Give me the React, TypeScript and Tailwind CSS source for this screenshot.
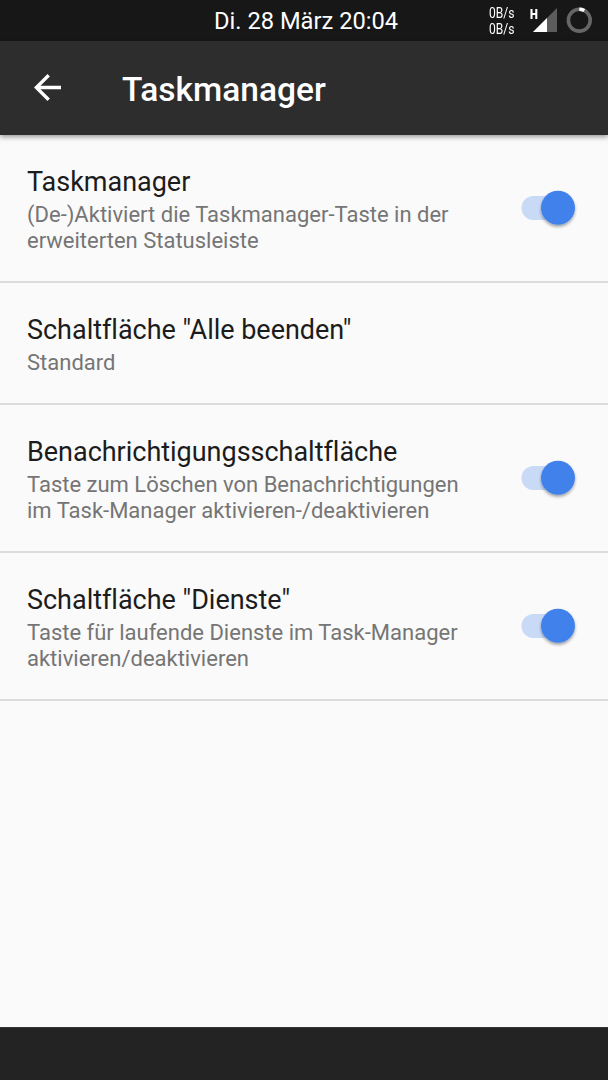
import React from "react";

function Toggle() {
  return (
    <svg className="h-[50px] w-[64px] shrink-0" viewBox="0 0 64 50" aria-hidden="true">
      <defs>
        <filter id="thumb" x="-30%" y="-30%" width="160%" height="170%">
          <feDropShadow dx="0" dy="2" stdDeviation="1.5" floodColor="#000" floodOpacity="0.36" />
        </filter>
      </defs>
      <rect x="5.500" y="13" width="48" height="24" rx="12" fill="#c8daf6" />
      <circle cx="42" cy="24.800" r="17" fill="#4081ec" filter="url(#thumb)" />
    </svg>
  );
}

type RowProps = { title: string; lines: string[]; toggle?: boolean };

function Row({ title, lines, toggle }: RowProps) {
  return (
    <div className={`flex items-center justify-between border-b-2 border-[#dcdcdc] pl-[27px] pr-[28px] ${lines.length > 1 ? "h-[148px]" : "h-[122px]"}`}>
      <div className="whitespace-nowrap pt-[5px]">
        <div className="mb-[4px] text-[27px] leading-[31px] tracking-[-0.02px] text-[#1c1c1c]">{title}</div>
        <div className="text-[22px] leading-[26px] text-[#757575]">
          {lines.map((l) => (
            <div key={l}>{l}</div>
          ))}
        </div>
      </div>
      {toggle && <Toggle />}
    </div>
  );
}

export default function App() {
  return (
    <div className="flex h-[1080px] w-[608px] flex-col overflow-hidden bg-[#fafafa] font-[Roboto,sans-serif]">
      <div className="flex h-[41px] shrink-0 items-center bg-[#171717] pl-[214px] text-white">
        <div className="w-[275px] whitespace-nowrap pt-[2px] text-[23.7px] leading-[41px]">Di. 28 März 20:04</div>
        <div className="w-[40px] origin-left scale-x-[0.86] text-[14px] leading-[16px]">
          <div>0B/s</div>
          <div>0B/s</div>
        </div>
        <svg className="h-[41px] w-[79px]" viewBox="529 0 79 41">
          <path d="M533 32 557 8V32Z" fill="#5c5c5c" />
          <path d="M533 32 547 18V32Z" fill="#fff" />
          <path d="M531.500 9V19M536.300 9V19M531 14H537" stroke="#fff" strokeWidth="2.100" />
          <circle cx="579.3" cy="20.2" r="10.9" fill="none" stroke="#666" strokeWidth="3.6" />
          <path d="M579.300 9.300A10.900 10.900 0 0 1 584.300 10.500" fill="none" stroke="#fff" strokeWidth="3.6" />
        </svg>
      </div>
      <div className="z-10 flex h-[94px] shrink-0 items-center bg-[#2d2d2d] pl-[33px] text-white shadow-[0_2px_5px_rgba(0,0,0,0.4)]">
        <svg className="h-[30px] w-[89px]" viewBox="33 73 89 30">
          <path transform="translate(27.25 67.25) scale(1.6875)" d="M20 11H7.830l5.590-5.590L12 4l-8 8 8 8 1.410-1.410L7.830 13H20z" fill="#fff" />
        </svg>
        <h1 className="pt-[3px] text-[33.5px] font-medium leading-[40px]">Taskmanager</h1>
      </div>
      <main className="flex grow flex-col">
        <Row title="Taskmanager" lines={["(De-)Aktiviert die Taskmanager-Taste in der", "erweiterten Statusleiste"]} toggle />
        <Row title={'Schaltfläche "Alle beenden"'} lines={["Standard"]} />
        <Row title="Benachrichtigungsschaltfläche" lines={["Taste zum Löschen von Benachrichtigungen", "im Task-Manager aktivieren-/deaktivieren"]} toggle />
        <Row title={'Schaltfläche "Dienste"'} lines={["Taste für laufende Dienste im Task-Manager", "aktivieren/deaktivieren"]} toggle />
      </main>
      <div className="h-[53px] shrink-0 border-t border-[#333] bg-[#232323]" />
    </div>
  );
}
